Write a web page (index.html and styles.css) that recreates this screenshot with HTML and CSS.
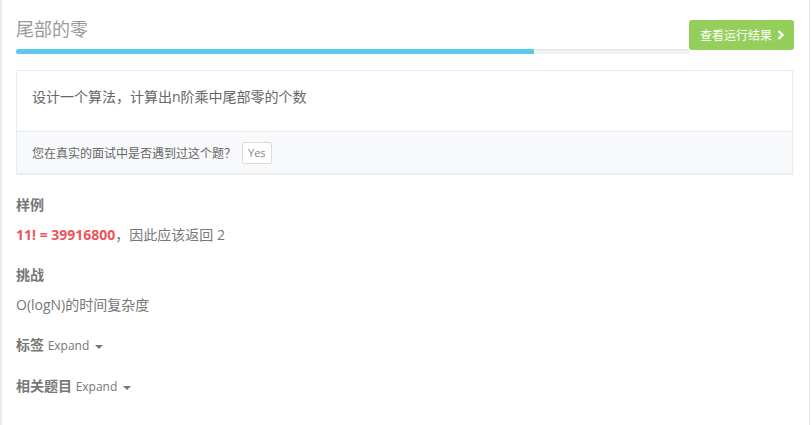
FILE: index.html
```html
<!DOCTYPE html>
<html lang="zh-CN">
<head>
    <meta charset="UTF-8">
    <meta name="viewport" content="width=device-width, initial-scale=1.0">
    <title>尾部的零</title>
    <link rel="stylesheet" href="styles.css">
</head>
<body>
    <div class="page">
        <div class="header">
            <div class="header-main">
                <h1 class="title">尾部的零</h1>
                <div class="progress">
                    <div class="progress-fill" style="width: 77%"></div>
                </div>
            </div>
            <button class="run-btn">查看运行结果
                <svg class="chevron" width="8" height="10" viewBox="0 0 8 10"><path d="M1.5 1 L5.5 5 L1.5 9" fill="none" stroke="#fff" stroke-width="2.4"/></svg>
            </button>
        </div>

        <div class="card">
            <div class="card-body">
                设计一个算法，计算出n阶乘中尾部零的个数
            </div>
            <div class="card-footer">
                <span>您在真实的面试中是否遇到过这个题？</span>
                <button class="yes-btn">Yes</button>
            </div>
        </div>

        <div class="sections">
            <div class="section">
                <h4>样例</h4>
                <p><span class="highlight">11! = 39916800</span>，因此应该返回 2</p>
            </div>

            <div class="section">
                <h4>挑战</h4>
                <p>O(logN)的时间复杂度</p>
            </div>

            <div class="section">
                <h4>标签 <span class="expand">Expand <span class="caret"></span></span></h4>
            </div>

            <div class="section">
                <h4>相关题目 <span class="expand">Expand <span class="caret"></span></span></h4>
            </div>
        </div>
    </div>
</body>
</html>
```

FILE: styles.css
```css
body {
    margin: 0;
    font-family: "Open Sans", "Noto Sans CJK SC", sans-serif;
    color: #666;
    background-color: #fff;
}
.page {
    width: 778px;
    min-height: 425px;
    padding: 0 15px 0 14px;
    border-left: 2px solid #e8eef6;
    border-right: 1px solid #e6e6e6;
}
.header {
    display: flex;
    align-items: flex-end;
    padding-top: 16px;
}
.header-main {
    flex: 1;
}
.title {
    margin: 0;
    font-size: 18px;
    line-height: 26px;
    font-weight: normal;
    color: #9a9a9a;
}
.progress {
    height: 5px;
    margin-top: 7px;
    background-color: #f2f2f2;
    border-radius: 3px;
    box-shadow: inset 0 1px 1px #e4e4e4;
    overflow: hidden;
}
.progress-fill {
    height: 100%;
    background-color: #5bc9ef;
}
.run-btn {
    display: flex;
    align-items: center;
    justify-content: center;
    gap: 5px;
    width: 105px;
    height: 30px;
    margin-bottom: 4px;
    padding: 0 0 0 2px;
    border: none;
    border-radius: 3px;
    background-color: #94cf5c;
    color: #fff;
    font-family: "Open Sans", "Noto Sans CJK SC", sans-serif;
    font-size: 12px;
}
.card {
    margin-top: 16px;
    margin-right: 1px;
    border: 1px solid #e8ecf1;
    box-shadow: 0 1px 1px #eef0f3;
}
.card-body {
    padding: 16px 15px 24px;
    font-size: 14px;
    line-height: 20px;
    color: #666;
}
.card-footer {
    display: flex;
    align-items: center;
    gap: 6px;
    height: 41px;
    padding: 0 15px;
    border-top: 1px solid #e8ecf1;
    background-color: #f8f9fb;
    font-size: 12px;
    color: #666;
}
.yes-btn {
    height: 22px;
    padding: 0 5px;
    border: 1px solid #dcdcdc;
    border-radius: 2px;
    background-color: #fff;
    color: #888;
    font-family: "Open Sans", sans-serif;
    font-size: 11px;
}
.sections {
    padding-top: 21px;
}
.section {
    margin-bottom: 20px;
}
.section h4 {
    margin: 0;
    font-size: 14px;
    line-height: 20px;
    font-weight: bold;
    color: #777;
}
.section p {
    margin: 10px 0 0;
    font-size: 14px;
    line-height: 20px;
    color: #777;
}
.highlight {
    color: #e9575c;
    font-weight: bold;
}
.expand {
    font-size: 12px;
    font-weight: normal;
    color: #777;
}
.caret {
    display: inline-block;
    width: 0;
    height: 0;
    margin-left: 3px;
    vertical-align: middle;
    border-top: 4px solid #777;
    border-left: 4px solid transparent;
    border-right: 4px solid transparent;
}
```
